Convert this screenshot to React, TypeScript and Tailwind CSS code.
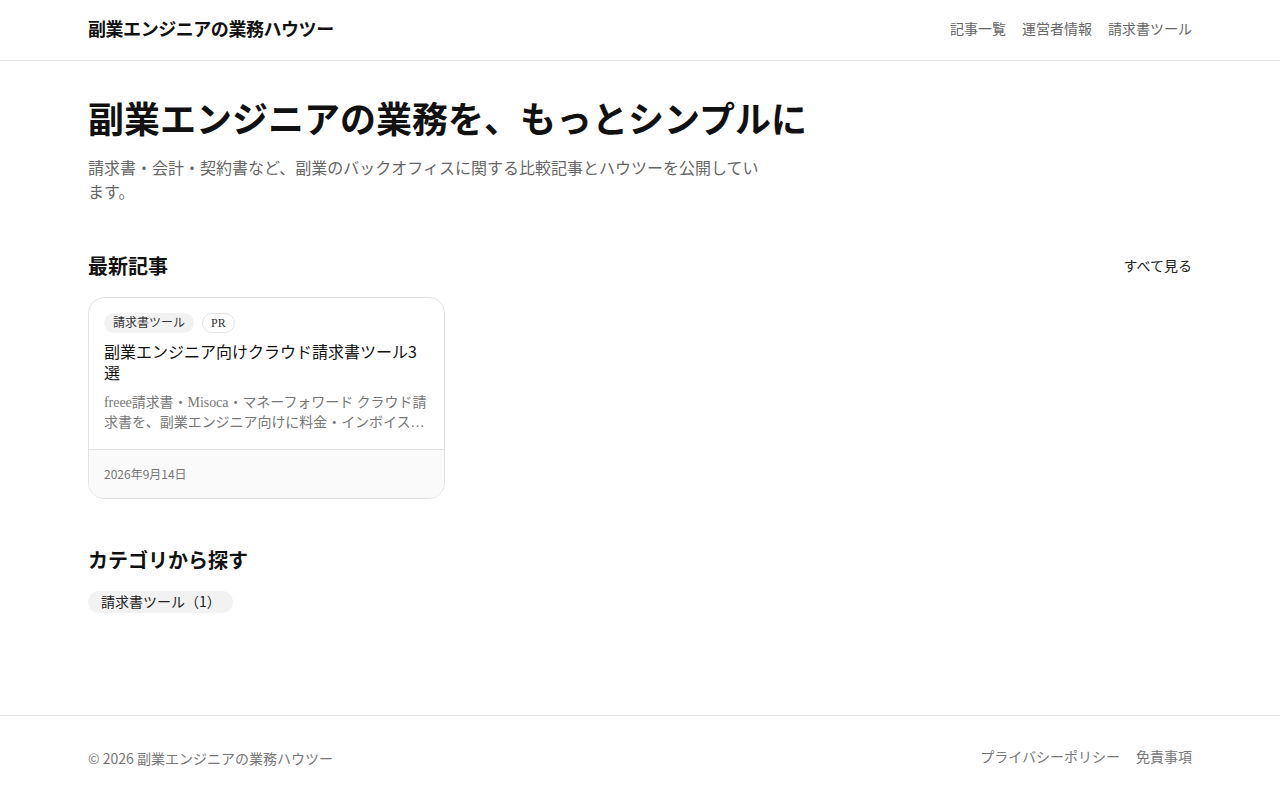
import React from "react";

const base = "font-['Liberation_Serif','Noto_Sans_CJK_JP',serif]";
const num = "font-['Noto_Sans_CJK_JP',sans-serif]";

function Header() {
  return (
    <header className="border-b border-[#e5e5e5]">
      <div className="mx-auto flex h-[60px] max-w-6xl items-center justify-between px-6">
        <a className="text-lg font-bold tracking-tight text-[#111]">副業エンジニアの業務ハウツー</a>
        <nav className="flex items-center gap-4 text-sm text-[#666]">
          <a>記事一覧</a>
          <a>運営者情報</a>
          <a>請求書ツール</a>
        </nav>
      </div>
    </header>
  );
}

function ArticleCard() {
  return (
    <article className="flex flex-col overflow-hidden rounded-2xl border border-[#e3e3e3] bg-white">
      <div className="flex flex-col px-[15px] pt-[15px] pb-4">
        <div className="flex items-center gap-2">
          <span className="rounded-full bg-[#f2f2f2] px-[9px] py-px text-xs leading-[18px] text-[#333]">
            請求書ツール
          </span>
          <span className="rounded-full border border-[#e3e3e3] px-2 text-xs leading-[18px] text-[#333]">
            PR
          </span>
        </div>
        <h3 className="mt-2 text-base leading-[21px] text-[#111]">
          副業エンジニア向けクラウド請求書ツール<span className={num}>3</span>選
        </h3>
        <p className="mt-[9px] line-clamp-2 text-sm leading-5 tracking-[-0.05px] text-[#777]">
          freee請求書・Misoca・マネーフォワード クラウド請求書を、副業エンジニア向けに料金・インボイス制度対応・使いやすさの観点で比較しました。
        </p>
      </div>
      <div className="border-t border-[#e3e3e3] bg-[#fafafa] px-[15px] py-4">
        <time className={`block text-xs leading-4 text-[#777] ${num}`}>2026年9月14日</time>
      </div>
    </article>
  );
}

export default function App() {
  return (
    <div className={`flex min-h-screen flex-col bg-white text-[#111] ${base}`}>
      <Header />
      <main className="flex-1">
        <div className="mx-auto max-w-6xl px-6 pt-10 pb-12">
          <section>
            <h1 className="text-4xl leading-10 font-bold text-[#111]">
              副業エンジニアの業務を、もっとシンプルに
            </h1>
            <p className="mt-4 max-w-2xl text-base leading-6 text-[#666]">
              請求書・会計・契約書など、副業のバックオフィスに関する比較記事とハウツーを公開しています。
            </p>
          </section>

          <section className="mt-12">
            <div className="mb-4 flex items-center justify-between">
              <h2 className="text-xl leading-7 font-bold">最新記事</h2>
              <a className="text-sm text-[#222]">すべて見る</a>
            </div>
            <div className="grid grid-cols-3 gap-4">
              <ArticleCard />
            </div>
          </section>

          <section className="mt-12">
            <h2 className="text-xl leading-7 font-bold">カテゴリから探す</h2>
            <div className="mt-4 flex flex-wrap gap-2">
              <a className="rounded-full bg-[#f2f2f2] pr-3 pl-[13px] text-sm leading-5 text-[#222]">
                請求書ツール（<span className={num}>1</span>）
              </a>
            </div>
          </section>
        </div>
      </main>
      <footer className="border-t border-[#e5e5e5]">
        <div className="mx-auto flex max-w-6xl items-center justify-between px-6 py-8 text-sm leading-5 text-[#777]">
          <p className={num}>© 2026 副業エンジニアの業務ハウツー</p>
          <nav className="flex items-center gap-4">
            <a>プライバシーポリシー</a>
            <a>免責事項</a>
          </nav>
        </div>
      </footer>
    </div>
  );
}
